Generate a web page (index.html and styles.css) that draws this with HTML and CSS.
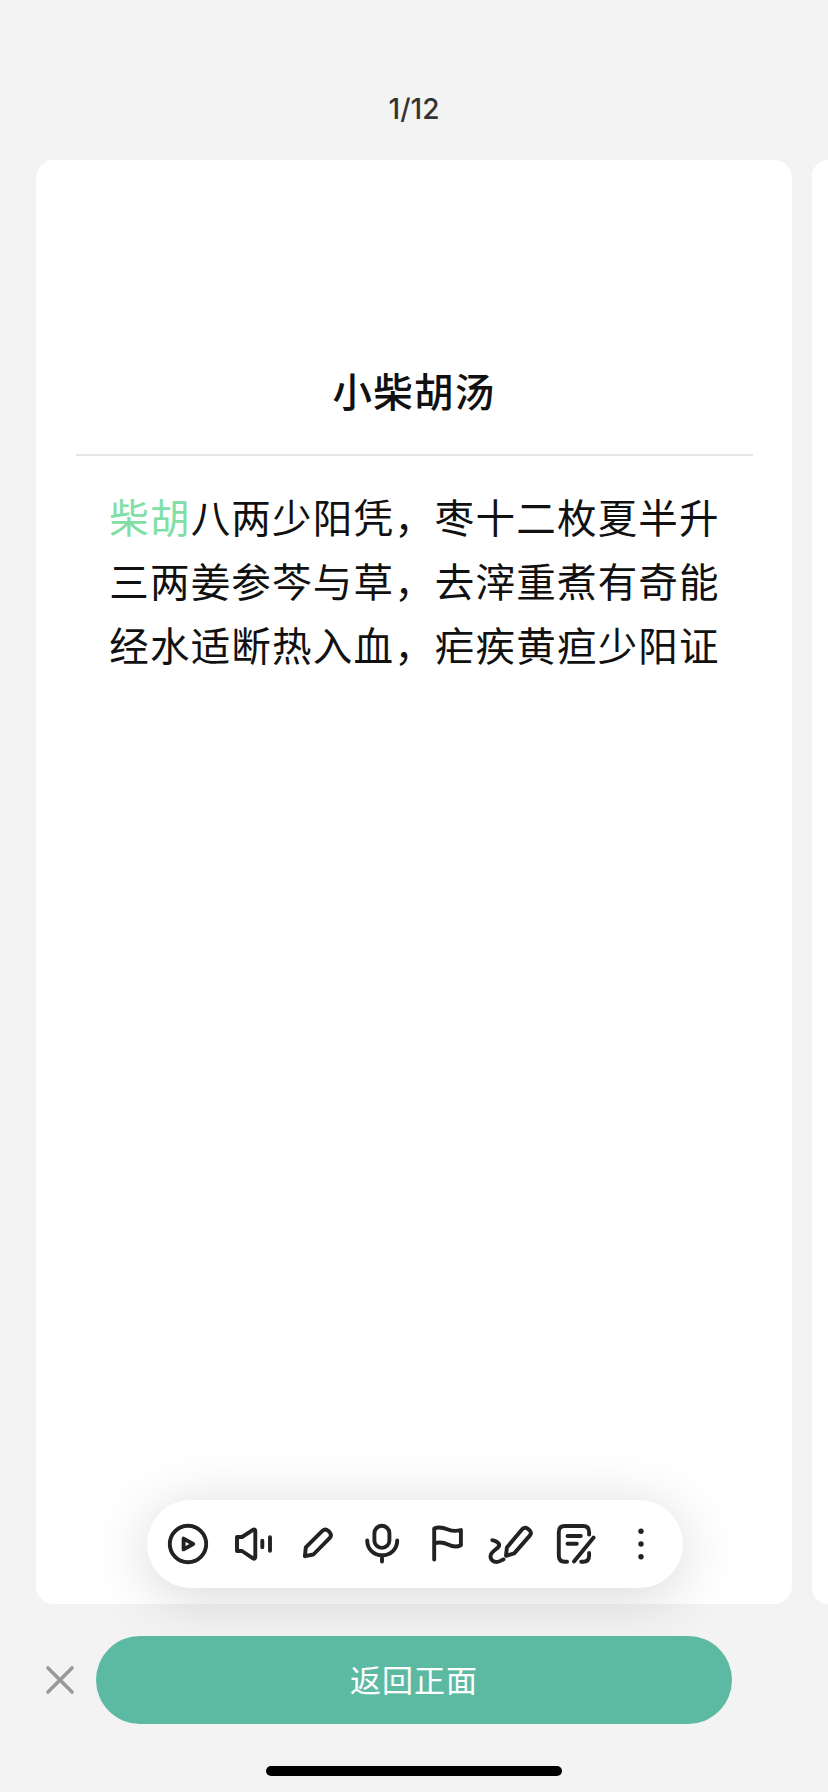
FILE: index.html
```html
<!DOCTYPE html>
<html lang="zh-CN">
<head>
  <meta charset="UTF-8">
  <title>小柴胡汤</title>
  <link rel="stylesheet" href="styles.css">
</head>
<body>
  <header class="counter">1/12</header>

  <main class="deck">
    <section class="card">
      <h1>小柴胡汤</h1>
      <div class="verse">
        <p><span class="mark">柴胡</span>八两少阳凭，枣十二枚夏半升</p>
        <p>三两姜参芩与草，去滓重煮有奇能</p>
        <p>经水适断热入血，疟疾黄疸少阳证</p>
      </div>
      <div class="toolbar">
        <button><svg viewBox="0 0 48 48"><circle cx="24" cy="24" r="18.2"/><path d="M19.6 18.6V29.4L29.2 24Z"/></svg></button>
        <button><svg viewBox="0 0 48 48"><path d="M8 17H13L24 9.8Q26.3 8.8 26.3 11.4V36.8Q26.3 39.4 24 38.4L13 31H8Z"/><path d="M33.3 20.8V27.2M41 17.3V30.7"/></svg></button>
        <button><svg viewBox="0 0 48 48"><path d="M10.9 36.2L11.8 27.4L28.6 10.7Q31.4 8.3 34.1 10.7L35.8 12.4Q38.2 15.2 35.8 17.9L19.4 34.5Z"/></svg></button>
        <button><svg viewBox="0 0 48 48"><rect x="16.4" y="5.8" width="15" height="22.1" rx="7.5"/><path d="M9.2 20.5C9.2 29 15.7 35.3 24.2 35.3S39.2 29 39.2 20.5M24 35.3V41.6"/></svg></button>
        <button><svg viewBox="0 0 48 48"><path d="M11.2 39.6V8.5C16 6.3 20 7.5 25 9.5C29.5 11.3 33.5 11.3 37.9 10V25.2C34 27.2 29.5 26.7 25 24.5C20.5 22.3 15.5 22 11.2 23.5"/></svg></button>
        <button><svg viewBox="0 0 48 48"><path d="M4.3 20.2C9.5 21.3 12.6 24 10.4 27C8.6 29.4 3.2 31.5 2.6 35.5C2 39.8 5.6 42.2 9.2 41.9C12 41.7 13.6 40 15.6 39.4"/><path d="M18 35.8L18.9 27.4L34.6 8.8Q37 6.8 39.5 8.5L41.8 10.5Q43.9 12.9 42 15.4L26.2 33.4Z"/></svg></button>
        <button><svg viewBox="0 0 48 48"><path d="M15.1 41.7H12.8Q6.8 41.7 6.8 35.7V12Q6.8 6 12.8 6H31.1Q37.1 6 37.1 12V14.5M37.1 33V35.7Q37.1 41.7 31.1 41.7H29.2M41.6 17.5L22 41.5M15.5 16H28.8M15.5 23.7H24.8"/></svg></button>
        <button><svg class="dots" viewBox="0 0 48 48"><circle cx="24" cy="11.3" r="2.7"/><circle cx="24" cy="24" r="2.7"/><circle cx="24" cy="36.7" r="2.7"/></svg></button>
      </div>
    </section>
    <section class="next"></section>
  </main>

  <footer class="actions">
    <button class="close"><svg viewBox="0 0 28 28"><path d="M2 2L26 26M26 2L2 26"/></svg></button>
    <button class="flip">返回正面</button>
  </footer>
  <div class="home-bar"></div>
</body>
</html>
```
FILE: styles.css
```css
* {
  box-sizing: border-box;
}
body {
  margin: 0;
  height: 1792px;
  display: flex;
  flex-direction: column;
  overflow: hidden;
  background: #f3f3f3;
  color: #111;
  font-family: "Noto Sans CJK SC", sans-serif;
}
button {
  padding: 0;
  border: 0;
  background: none;
  font: inherit;
}
svg {
  display: block;
  overflow: visible;
  fill: none;
  stroke: #222;
  stroke-width: 3.9;
  stroke-linecap: round;
  stroke-linejoin: round;
}
.counter {
  height: 160px;
  padding-top: 92px;
  text-align: center;
  font: 500 28px/34px Inter, sans-serif;
  color: #333;
}
.deck {
  display: flex;
  gap: 20px;
  height: 1443.5px;
  padding-left: 36px;
}
.card {
  flex: 0 0 756px;
  display: flex;
  flex-direction: column;
  align-items: center;
  padding: 0 39px 15.5px 40px;
  border-radius: 18px;
  background: #fff;
}
.next {
  flex: 1;
  border-radius: 18px 0 0 18px;
  background: #fff;
}
h1 {
  align-self: stretch;
  margin: 0;
  height: 296px;
  padding: 201px 1px 0 0;
  border-bottom: 2px solid #e6e6e6;
  text-align: center;
  font-size: 39.5px;
  font-weight: 500;
  line-height: 58px;
  letter-spacing: 1.2px;
}
.verse {
  margin-top: 28px;
  font-size: 39.5px;
  line-height: 64px;
  letter-spacing: 1.2px;
  white-space: nowrap;
  font-weight: 400;
}
.verse p {
  margin: 0;
}
.mark {
  color: #81dfa6;
}
.toolbar {
  display: flex;
  width: 536px;
  height: 88px;
  margin-top: auto;
  padding: 0 9px 0 9.5px;
  border-radius: 44px;
  background: #fff;
  box-shadow: 0 8px 60px rgba(0, 0, 0, 0.16);
}
.toolbar button {
  flex: 1;
  display: flex;
  align-items: center;
  justify-content: center;
}
.toolbar svg {
  width: 48px;
  height: 48px;
}
.toolbar .dots {
  fill: #222;
  stroke: none;
}
/* keeps the button above the toolbar shadow */
.actions {
  position: relative;
  display: flex;
  align-items: center;
  height: 88px;
  margin-top: 32.5px;
  padding-left: 46px;
}
.close {
  width: 50px;
}
.close svg {
  width: 28px;
  height: 28px;
  stroke: #999;
  stroke-width: 3.6;
}
.flip {
  width: 636px;
  height: 88px;
  padding-bottom: 4px;
  border-radius: 44px;
  background: #5dbaa2;
  color: #fff;
  font-size: 31px;
  font-weight: 400;
  letter-spacing: 1px;
}
.home-bar {
  width: 296px;
  height: 10px;
  margin: 42px auto 0;
  border-radius: 5px;
  background: #000;
}
```
